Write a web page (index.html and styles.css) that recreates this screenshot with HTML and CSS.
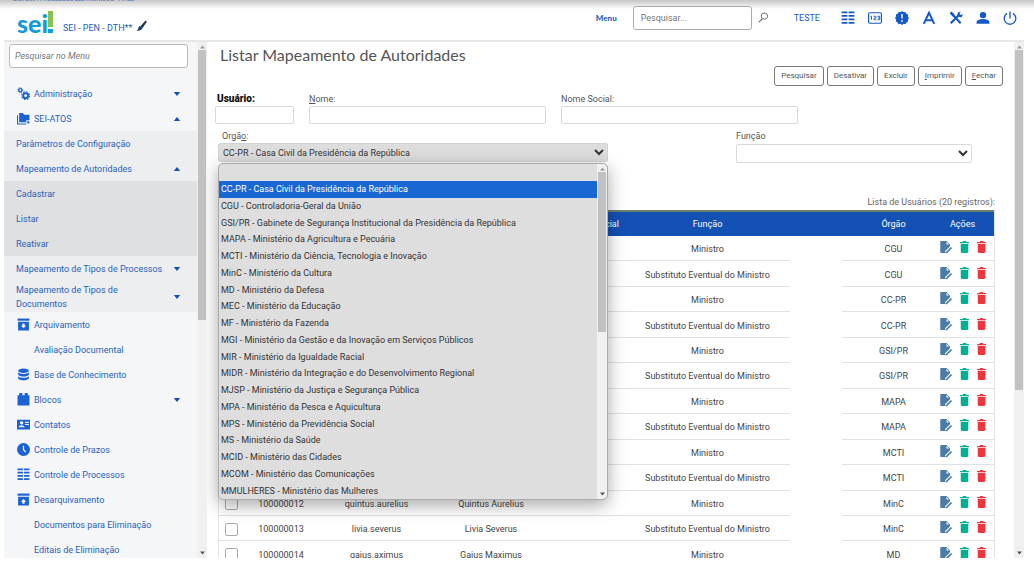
FILE: index.html
```html
<!DOCTYPE html>
<html lang="pt-BR">
<head>
<meta charset="utf-8">
<title>Listar Mapeamento de Autoridades</title>
<link rel="stylesheet" href="styles.css">
</head>
<body>
<svg class="sprite" aria-hidden="true">
  <symbol id="i-gears" viewBox="0 0 24 24"><g fill="none" stroke="currentColor"><circle cx="6" cy="6" r="3" stroke-width="2.500"/><circle cx="6" cy="6" r="4.800" stroke-width="1.500" stroke-dasharray="1.900 1.900"/><circle cx="16" cy="16" r="4.500" stroke-width="3.600"/><circle cx="16" cy="16" r="7.200" stroke-width="2.200" stroke-dasharray="3 2.650"/></g></symbol>
  <symbol id="i-folders" viewBox="0 0 24 24"><path d="M1 6v16h16" fill="none" stroke="currentColor" stroke-width="2"/><path d="M4 2h7l2 3h10v10h-6v4H4z"/><path d="M18 18h2v-2l4 3-4 3v-2h-2z"/></symbol>
  <symbol id="i-archive" viewBox="0 0 24 24"><path d="M1 1h22v4H1z"/><path fill-rule="evenodd" d="M2 7h20v16H2zM10 10v4H7l5 5 5-5h-3v-4z"/></symbol>
  <symbol id="i-unarchive" viewBox="0 0 24 24"><path d="M1 1h22v4H1z"/><path fill-rule="evenodd" d="M2 7h20v16H2zM10 20v-4H7l5-5 5 5h-3v4z"/></symbol>
  <symbol id="i-db" viewBox="0 0 24 24"><ellipse cx="12" cy="5" rx="10" ry="4"/><path d="M2 8c3 4 17 4 20 0v4c-2 5-18 5-20 0zM2 15c3 4 17 4 20 0v4c-2 5-18 5-20 0z"/></symbol>
  <symbol id="i-block" viewBox="0 0 24 24"><path d="M1 4h3V1q0-1 1-1h4q1 0 1 1v3h4V1q0-1 1-1h4q1 0 1 1v3h3v19H1z"/></symbol>
  <symbol id="i-contact" viewBox="0 0 24 24"><path fill-rule="evenodd" d="M0 3h24v18H0zM8.500 6a3 3 0 1 0 .1 0zM3 17h11c0-5-11-5-11 0zM15 7v2h7V7zm0 4v2h7v-2z"/></symbol>
  <symbol id="i-clock" viewBox="0 0 24 24"><circle cx="12" cy="12" r="12"/><path d="M12 5v7l4 5" fill="none" stroke="#fff" stroke-width="2.200"/></symbol>
  <symbol id="i-rows" viewBox="0 0 24 24"><path d="M1 1h10v3H1zM13 1h10v3H13zM1 7h10v3H1zM13 7h10v3H13zM1 13h10v3H1zM13 13h10v3H13zM1 19h10v3H1zM13 19h10v3H13z"/></symbol>
  <symbol id="i-123" viewBox="0 0 24 24"><rect x="1" y="3" width="22" height="18" rx="2" fill="none" stroke="currentColor" stroke-width="2"/><path d="M4 9h2v6M9.500 9h4v3h-3v3h3.500M16 9h4v6h-4m1-3h3" fill="none" stroke="currentColor" stroke-width="1.600"/></symbol>
  <symbol id="i-alert" viewBox="0 0 24 24"><path d="M12 0l3 2 3-.5 1.500 3 3 1.500-.5 3 2 3-2 3 .5 3-3 1.500-1.500 3-3-.5-3 2-3-2-3 .5-1.500-3-3-1.500.5-3-2-3 2-3-.5-3 3-1.500 1.500-3 3 .5z"/><path d="M12 5v8m0 3v3" stroke="#fff" stroke-width="2.500"/></symbol>
  <symbol id="i-letter" viewBox="0 0 24 24"><path d="M3 22L12 3l9 19M6.500 16h11" fill="none" stroke="currentColor" stroke-width="3.400"/></symbol>
  <symbol id="i-tools" viewBox="0 0 24 24"><path d="M6 6l14 15M3 21L17 7" fill="none" stroke="currentColor" stroke-width="3.800"/><path d="M1 4l3-3 5 4v4H6zM15 3l5-2-2 4 2 2 3-2c1 5-3 7-6 5l-3-3z"/></symbol>
  <symbol id="i-person" viewBox="0 0 24 24"><circle cx="12" cy="7" r="5.500"/><path d="M1 22v-3c1-7 21-7 22 0v3z"/></symbol>
  <symbol id="i-power" viewBox="0 0 24 24"><path d="M12 1v12M7 4a10 10 0 1 0 10 0" fill="none" stroke="currentColor" stroke-width="2.300"/></symbol>
  <symbol id="i-search" viewBox="0 0 24 24"><path d="M9 15L2 22" stroke="currentColor" stroke-width="2.500"/><circle cx="14" cy="9" r="7" fill="none" stroke="currentColor" stroke-width="2"/></symbol>
  <symbol id="i-edit" viewBox="0 0 24 26"><path d="M2 1h11l7 7v4l-9 9v4H2q-1.500 0-1.500-1.500v-21Q.5 1 2 1z"/><path d="M13 3v5h5z" fill="#fff"/><path d="M12 24l10-10" stroke="#fff" stroke-width="6"/><path d="M12 25l11-11" stroke="currentColor" stroke-width="3.500"/></symbol>
  <symbol id="i-trash" viewBox="0 0 18 24"><path d="M0 2h5l1-2h6l1 2h5v2.500H0zM1.500 6h15v15q0 3-3 3h-9q-3 0-3-3z"/></symbol>
  <symbol id="i-down" viewBox="0 0 8 5"><path d="M0 0h8L4 5z"/></symbol>
  <symbol id="i-up" viewBox="0 0 8 5"><path d="M0 5h8L4 0z"/></symbol>
</svg>

<div class="app">
  <header class="topbar">
    <div class="system-strip"><span>Sistema Processos Eletrônicos - Fiase</span></div>
    <div class="topbar-main">
      <div class="brand">
        <span class="logo"><span>sei</span><svg viewBox="0 0 5 24" aria-hidden="true"><path d="M0 0h5v16H0z" fill="#8cc152"/><path d="M0 18h5v4H0z" fill="#119bd8"/></svg></span>
        <a class="unit" href="#">SEI - PEN - DTH**</a>
        <svg class="brush" viewBox="0 0 24 24" aria-hidden="true"><path d="M9 13L20 1q4-2 3 3L14 17z" fill="#25354a"/><path d="M8 12l6 5q-3 6-13 6 4-2 4-6 1-4 3-5z" fill="#1c3f6c"/></svg>
      </div>
      <nav class="tools">
        <a class="menu-link" href="#">Menu</a>
        <input class="quick-search" type="text" placeholder="Pesquisar..." aria-label="Pesquisar">
        <button class="icon-btn search-btn" aria-label="Buscar"><svg><use href="#i-search"/></svg></button>
        <a class="unit-link" href="#">TESTE</a>
        <div class="tool-icons">
          <button class="icon-btn" aria-label="Controle de Processos"><svg><use href="#i-rows"/></svg></button>
          <button class="icon-btn" aria-label="Numeração"><svg><use href="#i-123"/></svg></button>
          <button class="icon-btn" aria-label="Novidades"><svg><use href="#i-alert"/></svg></button>
          <button class="icon-btn" aria-label="Fonte"><svg><use href="#i-letter"/></svg></button>
          <button class="icon-btn" aria-label="Configurações"><svg><use href="#i-tools"/></svg></button>
          <button class="icon-btn" aria-label="Usuário"><svg><use href="#i-person"/></svg></button>
          <button class="icon-btn" aria-label="Sair"><svg><use href="#i-power"/></svg></button>
        </div>
      </nav>
    </div>
  </header>

  <div class="workspace">
    <aside class="sidebar">
      <input class="menu-search" type="text" placeholder="Pesquisar no Menu" aria-label="Pesquisar no Menu">
      <nav class="side-menu">
        <a class="item" href="#"><svg class="ico"><use href="#i-gears"/></svg><span>Administração</span><svg class="caret"><use href="#i-down"/></svg></a>
        <a class="item" href="#"><svg class="ico"><use href="#i-folders"/></svg><span>SEI-ATOS</span><svg class="caret"><use href="#i-up"/></svg></a>
        <div class="level-1">
          <a class="item" href="#"><span>Parâmetros de Configuração</span></a>
          <a class="item" href="#"><span>Mapeamento de Autoridades</span><svg class="caret"><use href="#i-up"/></svg></a>
          <div class="level-2">
            <a class="item" href="#"><span>Cadastrar</span></a>
            <a class="item" href="#"><span>Listar</span></a>
            <a class="item" href="#"><span>Reativar</span></a>
          </div>
          <a class="item" href="#"><span>Mapeamento de Tipos de Processos</span><svg class="caret"><use href="#i-down"/></svg></a>
          <a class="item item-tall" href="#"><span>Mapeamento de Tipos de<br>Documentos</span><svg class="caret"><use href="#i-down"/></svg></a>
        </div>
        <a class="item" href="#"><svg class="ico"><use href="#i-archive"/></svg><span>Arquivamento</span></a>
        <a class="item no-ico" href="#"><span>Avaliação Documental</span></a>
        <a class="item" href="#"><svg class="ico"><use href="#i-db"/></svg><span>Base de Conhecimento</span></a>
        <a class="item" href="#"><svg class="ico"><use href="#i-block"/></svg><span>Blocos</span><svg class="caret"><use href="#i-down"/></svg></a>
        <a class="item" href="#"><svg class="ico"><use href="#i-contact"/></svg><span>Contatos</span></a>
        <a class="item" href="#"><svg class="ico"><use href="#i-clock"/></svg><span>Controle de Prazos</span></a>
        <a class="item" href="#"><svg class="ico"><use href="#i-rows"/></svg><span>Controle de Processos</span></a>
        <a class="item" href="#"><svg class="ico"><use href="#i-unarchive"/></svg><span>Desarquivamento</span></a>
        <a class="item no-ico" href="#"><span>Documentos para Eliminação</span></a>
        <a class="item no-ico" href="#"><span>Editais de Eliminação</span></a>
      </nav>
    </aside>
    <div class="scroll" aria-hidden="true"><svg class="up"><use href="#i-up"/></svg><div class="track"><div class="thumb thumb-side"></div></div><svg><use href="#i-down"/></svg></div>

    <main class="content">
      <h1>Listar Mapeamento de Autoridades</h1>
      <div class="actions">
        <button>Pesquisar</button><button>Desativar</button><button>Excluir</button><button><u>I</u>mprimir</button><button><u>F</u>echar</button>
      </div>
      <div class="filters">
        <div class="field field-user"><label class="strong" for="usuario">Usuário:</label><input id="usuario" type="text"></div>
        <div class="field field-name"><label for="nome"><u>N</u>ome:</label><input id="nome" type="text"></div>
        <div class="field field-name"><label for="social">Nome Social:</label><input id="social" type="text"></div>
      </div>
      <div class="selects">
        <div class="field field-org">
          <label for="orgao">Orgã<u>o</u>:</label>
          <select id="orgao"><option>CC-PR - Casa Civil da Presidência da República</option></select>
          <div class="popup">
            <ul class="options" role="listbox" aria-label="Orgão" id="options"></ul>
            <div class="scroll" aria-hidden="true"><svg class="up"><use href="#i-up"/></svg><div class="track"><div class="thumb"></div></div><svg><use href="#i-down"/></svg></div>
          </div>
        </div>
        <div class="field field-role"><label for="funcao">Função</label><select id="funcao"><option></option></select></div>
      </div>
      <table class="grid">
        <caption>Lista de Usuários (20 registros):</caption>
        <colgroup><col class="c-check"><col class="c-id"><col class="c-user"><col class="c-name"><col class="c-social"><col class="c-role"><col class="c-gap"><col class="c-org"><col class="c-act"></colgroup>
        <thead><tr><th></th><th></th><th></th><th></th><th class="shift">Nome Social</th><th>Função</th><th></th><th class="shift">Órgão</th><th>Ações</th></tr></thead>
        <tbody id="rows"></tbody>
      </table>
    </main>
    <div class="scroll" aria-hidden="true"><svg class="up"><use href="#i-up"/></svg><div class="track"><div class="thumb thumb-main"></div></div><svg><use href="#i-down"/></svg></div>
  </div>
</div>
<script src="app.js"></script>
</body>
</html>
```
FILE: styles.css
```css
* { box-sizing: border-box; }
body { margin: 0; font: 9px/14px Roboto, "Open Sans", sans-serif; color: #555; background: #fff; }
button, input, select { font: inherit; color: inherit; margin: 0; }
a { color: #2560b8; text-decoration: none; }
svg { fill: currentColor; flex: none; }
.sprite { display: none; }

.app { height: 100vh; display: flex; flex-direction: column; padding-bottom: 23px; background: linear-gradient(#c6c6c6, #fff 9px); }
.topbar { margin: 0 10px 0 4px; border-bottom: 2px solid #e6e7e8; flex: none; }
.system-strip { height: 3px; overflow: hidden; display: flex; align-items: flex-end; padding-left: 9px; color: #4474b8; line-height: 9px; text-transform: uppercase; font-size: 6px; }
.topbar-main { height: 37px; display: flex; justify-content: space-between; }
.brand { display: flex; align-items: flex-end; padding: 0 0 5px 13px; }
.logo { display: flex; align-items: flex-end; color: #119bd8; font: 900 25px/24px Lato, sans-serif; margin-right: 10px; }
.logo svg { width: 5px; height: 24px; }
.unit { line-height: 14px; }
.brush { width: 11px; height: 12px; margin: 0 0 3px 4px; }
.tools { display: flex; align-items: center; padding: 0 7px 8px 0; }
.menu-link { font: 900 8px/14px Lato, sans-serif; margin-right: 16px; }
.quick-search { width: 119px; height: 24px; padding: 0 7px; border: 1px solid #aaa; border-radius: 3px; background: #fff; }
input::placeholder { color: #777; opacity: 1; }
.icon-btn { border: 0; padding: 0; background: none; color: #1559c9; display: flex; }
.icon-btn svg { width: 14px; height: 14px; }
.search-btn { margin: 0 25px 0 6px; color: #666; }
.search-btn svg { width: 11px; height: 11px; }
.unit-link { margin-right: 21px; }
.tool-icons { display: flex; gap: 13px; }

.workspace { flex: 1; min-height: 0; display: flex; margin: 0 10px 0 4px; background: #fff; }
.sidebar { width: 193px; flex: none; overflow: hidden; background: #f4f6f8; padding-top: 2px; }
.menu-search { display: block; width: 179px; height: 24px; margin: 0 0 13px 5px; padding: 0 5px; border: 1px solid #bbb; border-radius: 3px; background: #fff; font-style: italic; }
.item { display: flex; align-items: center; height: 25px; padding: 0 16px 0 12px; color: #2a62b8; }
.item .ico { width: 13px; height: 13px; margin: 0 4px 0 1px; color: #1c62d2; }
.item .ico + span { margin-right: auto; }
.item .caret { width: 8px; height: 4px; margin-left: auto; color: #1450b0; }
.no-ico { padding-left: 30px; }
.item-tall { height: 31px; }
.level-1 { background: #eceef0; }
.level-2 { background: #dee0e2; }

.scroll { width: 10px; flex: none; display: flex; flex-direction: column; align-items: center; padding: 3px 0; background: #f0f0f0; }
.scroll > svg { width: 5px; height: 4px; color: #555; }
.scroll > .up { color: #999; }
.track { flex: 1; align-self: stretch; padding: 1px 1px; }
.thumb { height: 50%; background: #c1c1c1; }
.thumb-side { height: 54%; }
.thumb-main { height: 68%; }

.content { flex: 1; min-width: 0; overflow: hidden; padding: 4px 19px 0 11px; }
h1 { margin: 0 0 0 2px; font: 400 16px/18px Lato, sans-serif; color: #555; }
.actions { display: flex; justify-content: flex-end; gap: 3px; margin: 2px -8px 0 0; }
.actions button { height: 20px; padding: 0 6px; border: 1px solid #777; border-radius: 3px; background: #fff; font-size: 8px; line-height: 16px; }
.filters { display: flex; gap: 15px; margin: 6px 0 0 -3px; }
.field { display: flex; flex-direction: column; }
.field label { line-height: 14px; }
.field input { height: 18px; border: 1px solid #d5dade; border-radius: 2px; background: #fff; }
.field-user { width: 79px; }
.field-user label { padding-left: 2px; }
.field .strong { font-weight: 900; font-size: 10px; color: #111; }
.field-name { width: 237px; }
.selects { display: flex; justify-content: space-between; padding: 5px 23px 0 0; }
.field-org { position: relative; width: 390px; }
.field-org label { padding-left: 4px; }
.field-role { width: 236px; }
.field-role select { margin-top: 1px; }
select { height: 19px; padding: 0; border: 1px solid #d5dade; border-radius: 2px; background: #fff; color: #333; }
.field-org select { background: #ddd; border-color: #d3d3d3; }
.popup { position: absolute; top: 34px; left: 0; z-index: 2; width: 390px; height: 337px; display: flex; overflow: visible; background: #dedede; border: 1px solid #aaa; border-radius: 5px; box-shadow: 0 5px 18px rgba(0,0,0,.35); }
.options { flex: 1; display: flex; flex-direction: column; margin: 0; padding: 0; list-style: none; color: #333; }
.options li { flex: 1; min-height: 0; padding-left: 2px; display: flex; align-items: center; }
.options .on { background: #1967d2; color: #fff; }
.popup .scroll { border-radius: 0 5px 5px 0; }

.grid { width: 100%; height: 357px; margin-top: 32px; border-collapse: separate; border-spacing: 0; table-layout: fixed; border-right: 1px solid #e2e4e8; border-left: 1px solid #e2e4e8; }
caption { text-align: right; line-height: 14px; padding-bottom: 1px; color: #666; }
th { height: 26px; padding: 0; background: #1351b4; color: #fff; font-weight: 400; border-top: 2px solid #72806a; }
td { padding: 2px 0 0; text-align: center; border-bottom: 1px solid #dfe2e5; color: #444; }
td.gap { border: 0; }
th.shift, td.shift { padding-left: 14px; }
.c-check { width: 24px; } .c-id { width: 76px; } .c-user { width: 115px; } .c-name { width: 114px; }
.c-social { width: 77px; } .c-gap { width: 52px; } .c-org { width: 89px; } .c-act { width: 63px; }
td input { appearance: none; display: block; width: 13px; height: 13px; margin: 0 auto; border: 1px solid #aaa; border-radius: 2px; background: #fff; }
.row-actions { display: flex; justify-content: center; align-items: center; gap: 8px; padding-bottom: 4px; }
.row-actions .icon-btn svg { width: 9px; height: 12px; }
.row-actions .edit svg { width: 12px; height: 14px; }
.row-actions .edit { color: #4d7ba8; }
.row-actions .off { color: #00b090; }
.row-actions .del { color: #f0353d; }
```
FILE: app.js
```js
const organs = ["", "CC-PR - Casa Civil da Presidência da República", "CGU - Controladoria-Geral da União",
  "GSI/PR - Gabinete de Segurança Institucional da Presidência da República", "MAPA - Ministério da Agricultura e Pecuária",
  "MCTI - Ministério da Ciência, Tecnologia e Inovação", "MinC - Ministério da Cultura", "MD - Ministério da Defesa",
  "MEC - Ministério da Educação", "MF - Ministério da Fazenda", "MGI - Ministério da Gestão e da Inovação em Serviços Públicos",
  "MIR - Ministério da Igualdade Racial", "MIDR - Ministério da Integração e do Desenvolvimento Regional",
  "MJSP - Ministério da Justiça e Segurança Pública", "MPA - Ministério da Pesca e Aquicultura", "MPS - Ministério da Previdência Social",
  "MS - Ministério da Saúde", "MCID - Ministério das Cidades", "MCOM - Ministério das Comunicações", "MMULHERES - Ministério das Mulheres"];
document.getElementById("options").innerHTML = organs
  .map((o, i) => `<li role="option"${i === 1 ? ' class="on" aria-selected="true"' : ""}>${o}</li>`).join("");

const M = "Ministro", S = "Substituto Eventual do Ministro";
const rows = [["", "", "", M, "CGU"], ["", "", "", S, "CGU"], ["", "", "", M, "CC-PR"], ["", "", "", S, "CC-PR"],
  ["", "", "", M, "GSI/PR"], ["", "", "", S, "GSI/PR"], ["", "", "", M, "MAPA"], ["", "", "", S, "MAPA"],
  ["", "", "", M, "MCTI"], ["", "", "", S, "MCTI"],
  ["100000012", "quintus.aurelius", "Quintus Aurelius", M, "MinC"],
  ["100000013", "livia.severus", "Livia Severus", S, "MinC"],
  ["100000014", "gaius.aximus", "Gaius Maximus", M, "MD"]];
const button = (cls, icon, label) => `<button class="icon-btn ${cls}" aria-label="${label}"><svg><use href="#${icon}"/></svg></button>`;
document.getElementById("rows").innerHTML = rows.map(([id, user, name, role, org]) => `<tr>
  <td><input type="checkbox" aria-label="Selecionar ${name}"></td><td>${id}</td><td>${user}</td><td>${name}</td><td></td>
  <td>${role}</td><td class="gap"></td><td class="shift">${org}</td>
  <td><div class="row-actions">${button("edit", "i-edit", "Editar")}${button("off", "i-trash", "Desativar")}${button("del", "i-trash", "Excluir")}</div></td></tr>`).join("");
```
